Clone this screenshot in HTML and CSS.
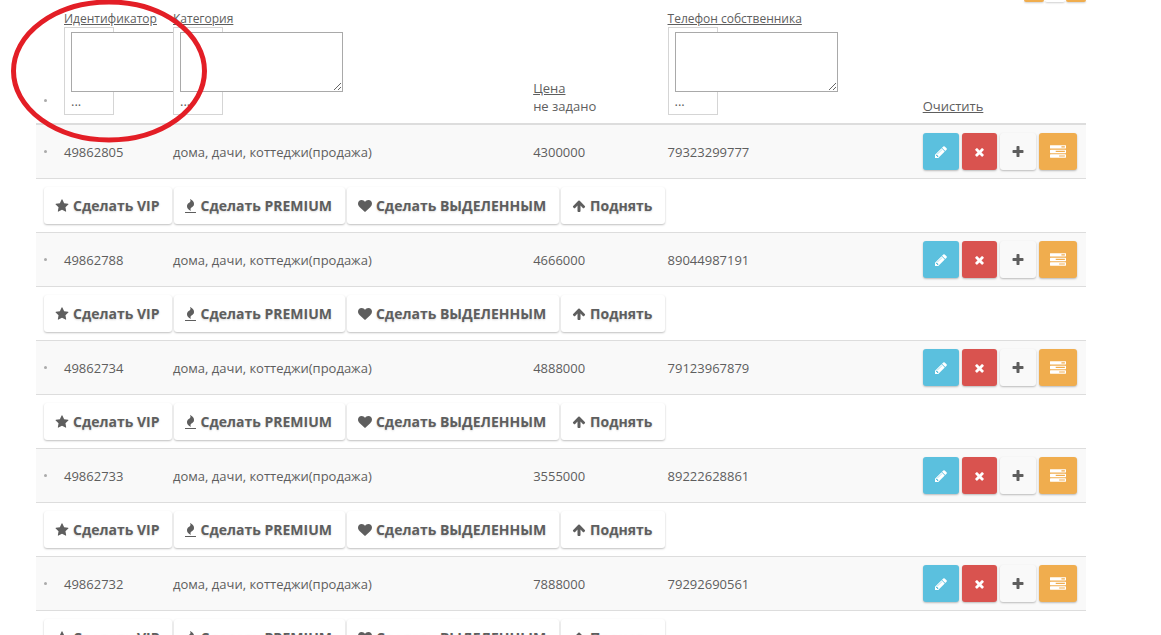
FILE: index.html
```html
<!DOCTYPE html>
<html lang="ru">
<head>
  <meta charset="UTF-8" />
  <meta name="viewport" content="width=device-width, initial-scale=1.0"/>
  <title>Объявления</title>
  <link rel="stylesheet" href="styles.css">
</head>
<body>

  <!-- ===== Icons ===== -->
  <svg class="sprite" aria-hidden="true">
    <symbol id="star" viewBox="0 0 1792 1792"><path d="M1728 647q0 22-26 48l-363 354 86 500q1 7 1 20 0 21-10.500 35.500t-30.500 14.500q-19 0-40-12l-449-236-449 236q-22 12-40 12-21 0-31.500-14.500t-10.500-35.500q0-6 2-20l86-500-364-354q-25-27-25-48 0-37 56-46l502-73 225-455q19-41 49-41t49 41l225 455 502 73q56 9 56 46z"/></symbol>
    <symbol id="fire" viewBox="192 0 1408 1792"><path d="M1600 1696v64q0 13-9.500 22.500t-22.500 9.500h-1344q-13 0-22.500-9.500t-9.500-22.500v-64q0-13 9.500-22.500t22.500-9.500h1344q13 0 22.500 9.500t9.500 22.500zm-256-1056q0 78-24.500 144t-64 112.500-87.500 88-96 77.500-87.500 72-64 81.500-24.500 96.500q0 96 67 224l-4-1 1 1q-90-41-160-83t-138.500-100-113.500-122.500-72.500-150.500-27.500-184q0-78 24.500-144t64-112.500 87.500-88 96-77.500 87.500-72 64-81.500 24.500-96.500q0-94-66-224l3 1-1-1q90 41 160 83t138.500 100 113.500 122.500 72.500 150.500 27.500 184z"/></symbol>
    <symbol id="heart" viewBox="0 0 1792 1792"><path d="M896 1664q-26 0-44-18l-624-602q-10-8-27.500-26t-55.500-65.500-68-97.500-53.500-121-23.500-138q0-220 127-344t351-124q62 0 126.500 21.500t120 58 95.500 68.500 76 68q36-36 76-68t95.500-68.500 120-58 126.500-21.500q224 0 351 124t127 344q0 221-229 450l-623 600q-18 18-44 18z"/></symbol>
    <symbol id="up" viewBox="64 0 1664 1792"><path d="M1675 971q0 51-37 90l-75 75q-38 38-91 38-54 0-90-38l-294-293v704q0 52-37.500 84.500t-90.500 32.500h-128q-53 0-90.500-32.500t-37.500-84.500v-704l-294 293q-36 38-90 38t-90-38l-75-75q-38-38-38-90 0-53 38-91l651-651q35-37 90-37 54 0 91 37l651 651q37 39 37 91z"/></symbol>
    <symbol id="pencil" viewBox="0 0 1792 1792"><path d="M491 1536l91-91-235-235-91 91v107h128v128h107zm523-928q0-22-22-22-10 0-17 7l-542 542q-7 7-7 17 0 22 22 22 10 0 17-7l542-542q7-7 7-17zm-54-192l416 416-832 832h-416v-416zm683 96q0 53-37 90l-166 166-416-416 166-165q36-38 90-38 53 0 91 38l235 234q37 39 37 91z"/></symbol>
    <symbol id="times" viewBox="0 0 1792 1792"><path d="M1490 1322q0 40-28 68l-136 136q-28 28-68 28t-68-28l-294-294-294 294q-28 28-68 28t-68-28l-136-136q-28-28-28-68t28-68l294-294-294-294q-28-28-28-68t28-68l136-136q28-28 68-28t68 28l294 294 294-294q28-28 68-28t68 28l136 136q28 28 28 68t-28 68l-294 294 294 294q28 28 28 68z"/></symbol>
    <symbol id="plus" viewBox="0 0 1792 1792"><path d="M1600 736v192q0 40-28 68t-68 28h-416v416q0 40-28 68t-68 28h-192q-40 0-68-28t-28-68v-416h-416q-40 0-68-28t-28-68v-192q0-40 28-68t68-28h416v-416q0-40 28-68t68-28h192q40 0 68 28t28 68v416h416q40 0 68 28t28 68z"/></symbol>
    <symbol id="tasks" viewBox="0 0 1792 1792"><path d="M1024 1408h640v-128h-640v128zm-384-512h1024v-128h-1024v128zm640-512h384v-128h-384v128zm512 832v256q0 26-19 45t-45 19h-1664q-26 0-45-19t-19-45v-256q0-26 19-45t45-19h1664q26 0 45 19t19 45zm0-512v256q0 26-19 45t-45 19h-1664q-26 0-45-19t-19-45v-256q0-26 19-45t45-19h1664q26 0 45 19t19 45zm0-512v256q0 26-19 45t-45 19h-1664q-26 0-45-19t-19-45v-256q0-26 19-45t45-19h1664q26 0 45 19t19 45z"/></symbol>
  </svg>

  <!-- ===== Top Toolbar ===== -->
  <div class="toolbar">
    <span class="tool orange"></span>
    <span class="tool"></span>
    <span class="tool orange"></span>
  </div>

  <!-- ===== Listings Table ===== -->
  <table class="listings">
    <colgroup>
      <col class="col-dot">
      <col class="col-id">
      <col class="col-category">
      <col class="col-price">
      <col class="col-phone">
      <col class="col-actions">
    </colgroup>
    <thead>
      <tr>
        <th><span class="dot"></span></th>
        <th>
          <label for="filterId">Идентификатор</label>
          <div class="filter-box"><textarea id="filterId"></textarea><span>...</span></div>
        </th>
        <th>
          <label for="filterCategory">Категория</label>
          <div class="filter-box"><textarea id="filterCategory"></textarea><span>...</span></div>
        </th>
        <th><a href="#">Цена</a><br>не задано</th>
        <th>
          <label for="filterPhone">Телефон собственника</label>
          <div class="filter-box"><textarea id="filterPhone"></textarea><span>...</span></div>
        </th>
        <th><a href="#">Очистить</a></th>
      </tr>
    </thead>
    <tbody>
      <tr class="item">
        <td><span class="dot"></span></td>
        <td>49862805</td>
        <td>дома, дачи, коттеджи(продажа)</td>
        <td>4300000</td>
        <td>79323299777</td>
        <td>
          <div class="actions">
            <button class="btn blue" aria-label="Редактировать"><svg class="icon"><use href="#pencil"/></svg></button>
            <button class="btn red" aria-label="Удалить"><svg class="icon small"><use href="#times"/></svg></button>
            <button class="btn" aria-label="Добавить"><svg class="icon"><use href="#plus"/></svg></button>
            <button class="btn orange" aria-label="Задачи"><svg class="icon wide"><use href="#tasks"/></svg></button>
          </div>
        </td>
      </tr>
      <tr>
        <td colspan="6">
          <div class="promo">
            <button class="btn"><svg class="icon"><use href="#star"/></svg>Сделать VIP</button>
            <button class="btn"><svg class="icon slim"><use href="#fire"/></svg>Сделать PREMIUM</button>
            <button class="btn"><svg class="icon"><use href="#heart"/></svg>Сделать ВЫДЕЛЕННЫМ</button>
            <button class="btn"><svg class="icon"><use href="#up"/></svg>Поднять</button>
          </div>
        </td>
      </tr>

      <tr class="item">
        <td><span class="dot"></span></td>
        <td>49862788</td>
        <td>дома, дачи, коттеджи(продажа)</td>
        <td>4666000</td>
        <td>89044987191</td>
        <td>
          <div class="actions">
            <button class="btn blue" aria-label="Редактировать"><svg class="icon"><use href="#pencil"/></svg></button>
            <button class="btn red" aria-label="Удалить"><svg class="icon small"><use href="#times"/></svg></button>
            <button class="btn" aria-label="Добавить"><svg class="icon"><use href="#plus"/></svg></button>
            <button class="btn orange" aria-label="Задачи"><svg class="icon wide"><use href="#tasks"/></svg></button>
          </div>
        </td>
      </tr>
      <tr>
        <td colspan="6">
          <div class="promo">
            <button class="btn"><svg class="icon"><use href="#star"/></svg>Сделать VIP</button>
            <button class="btn"><svg class="icon slim"><use href="#fire"/></svg>Сделать PREMIUM</button>
            <button class="btn"><svg class="icon"><use href="#heart"/></svg>Сделать ВЫДЕЛЕННЫМ</button>
            <button class="btn"><svg class="icon"><use href="#up"/></svg>Поднять</button>
          </div>
        </td>
      </tr>

      <tr class="item">
        <td><span class="dot"></span></td>
        <td>49862734</td>
        <td>дома, дачи, коттеджи(продажа)</td>
        <td>4888000</td>
        <td>79123967879</td>
        <td>
          <div class="actions">
            <button class="btn blue" aria-label="Редактировать"><svg class="icon"><use href="#pencil"/></svg></button>
            <button class="btn red" aria-label="Удалить"><svg class="icon small"><use href="#times"/></svg></button>
            <button class="btn" aria-label="Добавить"><svg class="icon"><use href="#plus"/></svg></button>
            <button class="btn orange" aria-label="Задачи"><svg class="icon wide"><use href="#tasks"/></svg></button>
          </div>
        </td>
      </tr>
      <tr>
        <td colspan="6">
          <div class="promo">
            <button class="btn"><svg class="icon"><use href="#star"/></svg>Сделать VIP</button>
            <button class="btn"><svg class="icon slim"><use href="#fire"/></svg>Сделать PREMIUM</button>
            <button class="btn"><svg class="icon"><use href="#heart"/></svg>Сделать ВЫДЕЛЕННЫМ</button>
            <button class="btn"><svg class="icon"><use href="#up"/></svg>Поднять</button>
          </div>
        </td>
      </tr>

      <tr class="item">
        <td><span class="dot"></span></td>
        <td>49862733</td>
        <td>дома, дачи, коттеджи(продажа)</td>
        <td>3555000</td>
        <td>89222628861</td>
        <td>
          <div class="actions">
            <button class="btn blue" aria-label="Редактировать"><svg class="icon"><use href="#pencil"/></svg></button>
            <button class="btn red" aria-label="Удалить"><svg class="icon small"><use href="#times"/></svg></button>
            <button class="btn" aria-label="Добавить"><svg class="icon"><use href="#plus"/></svg></button>
            <button class="btn orange" aria-label="Задачи"><svg class="icon wide"><use href="#tasks"/></svg></button>
          </div>
        </td>
      </tr>
      <tr>
        <td colspan="6">
          <div class="promo">
            <button class="btn"><svg class="icon"><use href="#star"/></svg>Сделать VIP</button>
            <button class="btn"><svg class="icon slim"><use href="#fire"/></svg>Сделать PREMIUM</button>
            <button class="btn"><svg class="icon"><use href="#heart"/></svg>Сделать ВЫДЕЛЕННЫМ</button>
            <button class="btn"><svg class="icon"><use href="#up"/></svg>Поднять</button>
          </div>
        </td>
      </tr>

      <tr class="item">
        <td><span class="dot"></span></td>
        <td>49862732</td>
        <td>дома, дачи, коттеджи(продажа)</td>
        <td>7888000</td>
        <td>79292690561</td>
        <td>
          <div class="actions">
            <button class="btn blue" aria-label="Редактировать"><svg class="icon"><use href="#pencil"/></svg></button>
            <button class="btn red" aria-label="Удалить"><svg class="icon small"><use href="#times"/></svg></button>
            <button class="btn" aria-label="Добавить"><svg class="icon"><use href="#plus"/></svg></button>
            <button class="btn orange" aria-label="Задачи"><svg class="icon wide"><use href="#tasks"/></svg></button>
          </div>
        </td>
      </tr>
      <tr>
        <td colspan="6">
          <div class="promo">
            <button class="btn"><svg class="icon"><use href="#star"/></svg>Сделать VIP</button>
            <button class="btn"><svg class="icon slim"><use href="#fire"/></svg>Сделать PREMIUM</button>
            <button class="btn"><svg class="icon"><use href="#heart"/></svg>Сделать ВЫДЕЛЕННЫМ</button>
            <button class="btn"><svg class="icon"><use href="#up"/></svg>Поднять</button>
          </div>
        </td>
      </tr>
    </tbody>
  </table>

  <!-- Red marker round the ID filter -->
  <svg class="marker" viewBox="0 0 198 146" aria-hidden="true">
    <ellipse cx="99" cy="73" rx="95.5" ry="69"/>
  </svg>

</body>
</html>
```
FILE: styles.css
```css
body {
  margin: 0;
  padding: 0 75px 0 36px;
  background: #fff;
  color: #5e5e5e;
  font-family: 'Open Sans', 'Noto Sans', sans-serif;
  font-size: 13px;
  line-height: 18px;
}
a { color: inherit; }
.sprite { display: none; }

/* ===== Top Toolbar ===== */
.toolbar {
  display: flex;
  justify-content: flex-end;
  gap: 1px;
}
.tool {
  width: 20px;
  height: 2px;
  border-radius: 0 0 3px 3px;
  box-shadow: 0 1px 2px rgba(0,0,0,0.2);
}

/* ===== Listings Table ===== */
.listings {
  width: 100%;
  table-layout: fixed;
  border-collapse: separate;
  border-spacing: 0;
}
.col-dot { width: 20px; }
.col-id { width: 109px; }
.col-category { width: 34.3%; }
.col-price { width: 12.8%; }
.col-phone { width: 24.3%; }

th, td {
  padding: 8px;
  text-align: left;
  font-weight: normal;
  white-space: nowrap;
}
th {
  vertical-align: bottom;
  border-bottom: 2px solid #ddd;
}
td {
  vertical-align: middle;
  border-bottom: 1px solid #ddd;
}
.item td { background: #f9f9f9; }
th label {
  display: block;
  font-size: 12px;
  line-height: 17px;
  text-decoration: underline;
}
.dot {
  display: block;
  width: 3px;
  height: 3px;
  border-radius: 50%;
  background: #aaa;
}
th .dot { margin-bottom: 13px; }

/* ===== Column Filters ===== */
.filter-box {
  position: relative;
  box-sizing: border-box;
  width: 50px;
  padding: 4px 6px;
  background: #fff;
  border: 1px solid #d5d5d5;
}
.filter-box textarea {
  display: block;
  box-sizing: border-box;
  width: 163px;
  height: 60px;
  margin: 0;
  border: 1px solid #a9a9a9;
  background: #fff;
}
.filter-box span { display: block; }

/* ===== Buttons ===== */
.btn {
  display: inline-flex;
  align-items: center;
  gap: 3px;
  height: 37px;
  padding: 0 11px;
  border: 0;
  border-radius: 3px;
  background: transparent;
  color: #5e5e5e;
  font: bold 14px 'Open Sans', 'Noto Sans', sans-serif;
  text-shadow: 0 1px 2px rgba(0,0,0,0.15);
  box-shadow: 0 1px 2px rgba(0,0,0,0.25);
  cursor: pointer;
}
.actions, .promo { display: flex; }
.actions { gap: 3px; }
.promo { gap: 2px; }
.promo .btn {
  gap: 4px;
  padding-right: 13px;
}
.blue { background: #5bc0de; color: #fff; }
.red { background: #d9534f; color: #fff; }
.orange { background: #f0ad4e; color: #fff; }

.icon {
  width: 14px;
  height: 14px;
  fill: currentColor;
}
.icon.slim { width: 11px; }
.icon.small { width: 13px; }
.icon.wide { width: 16px; height: 16px; }

/* ===== Marker ===== */
.marker {
  position: absolute;
  top: -2px;
  left: 10px;
  width: 198px;
  height: 146px;
  pointer-events: none;
}
.marker ellipse {
  fill: none;
  stroke: #e31e26;
  stroke-width: 5;
}
```
